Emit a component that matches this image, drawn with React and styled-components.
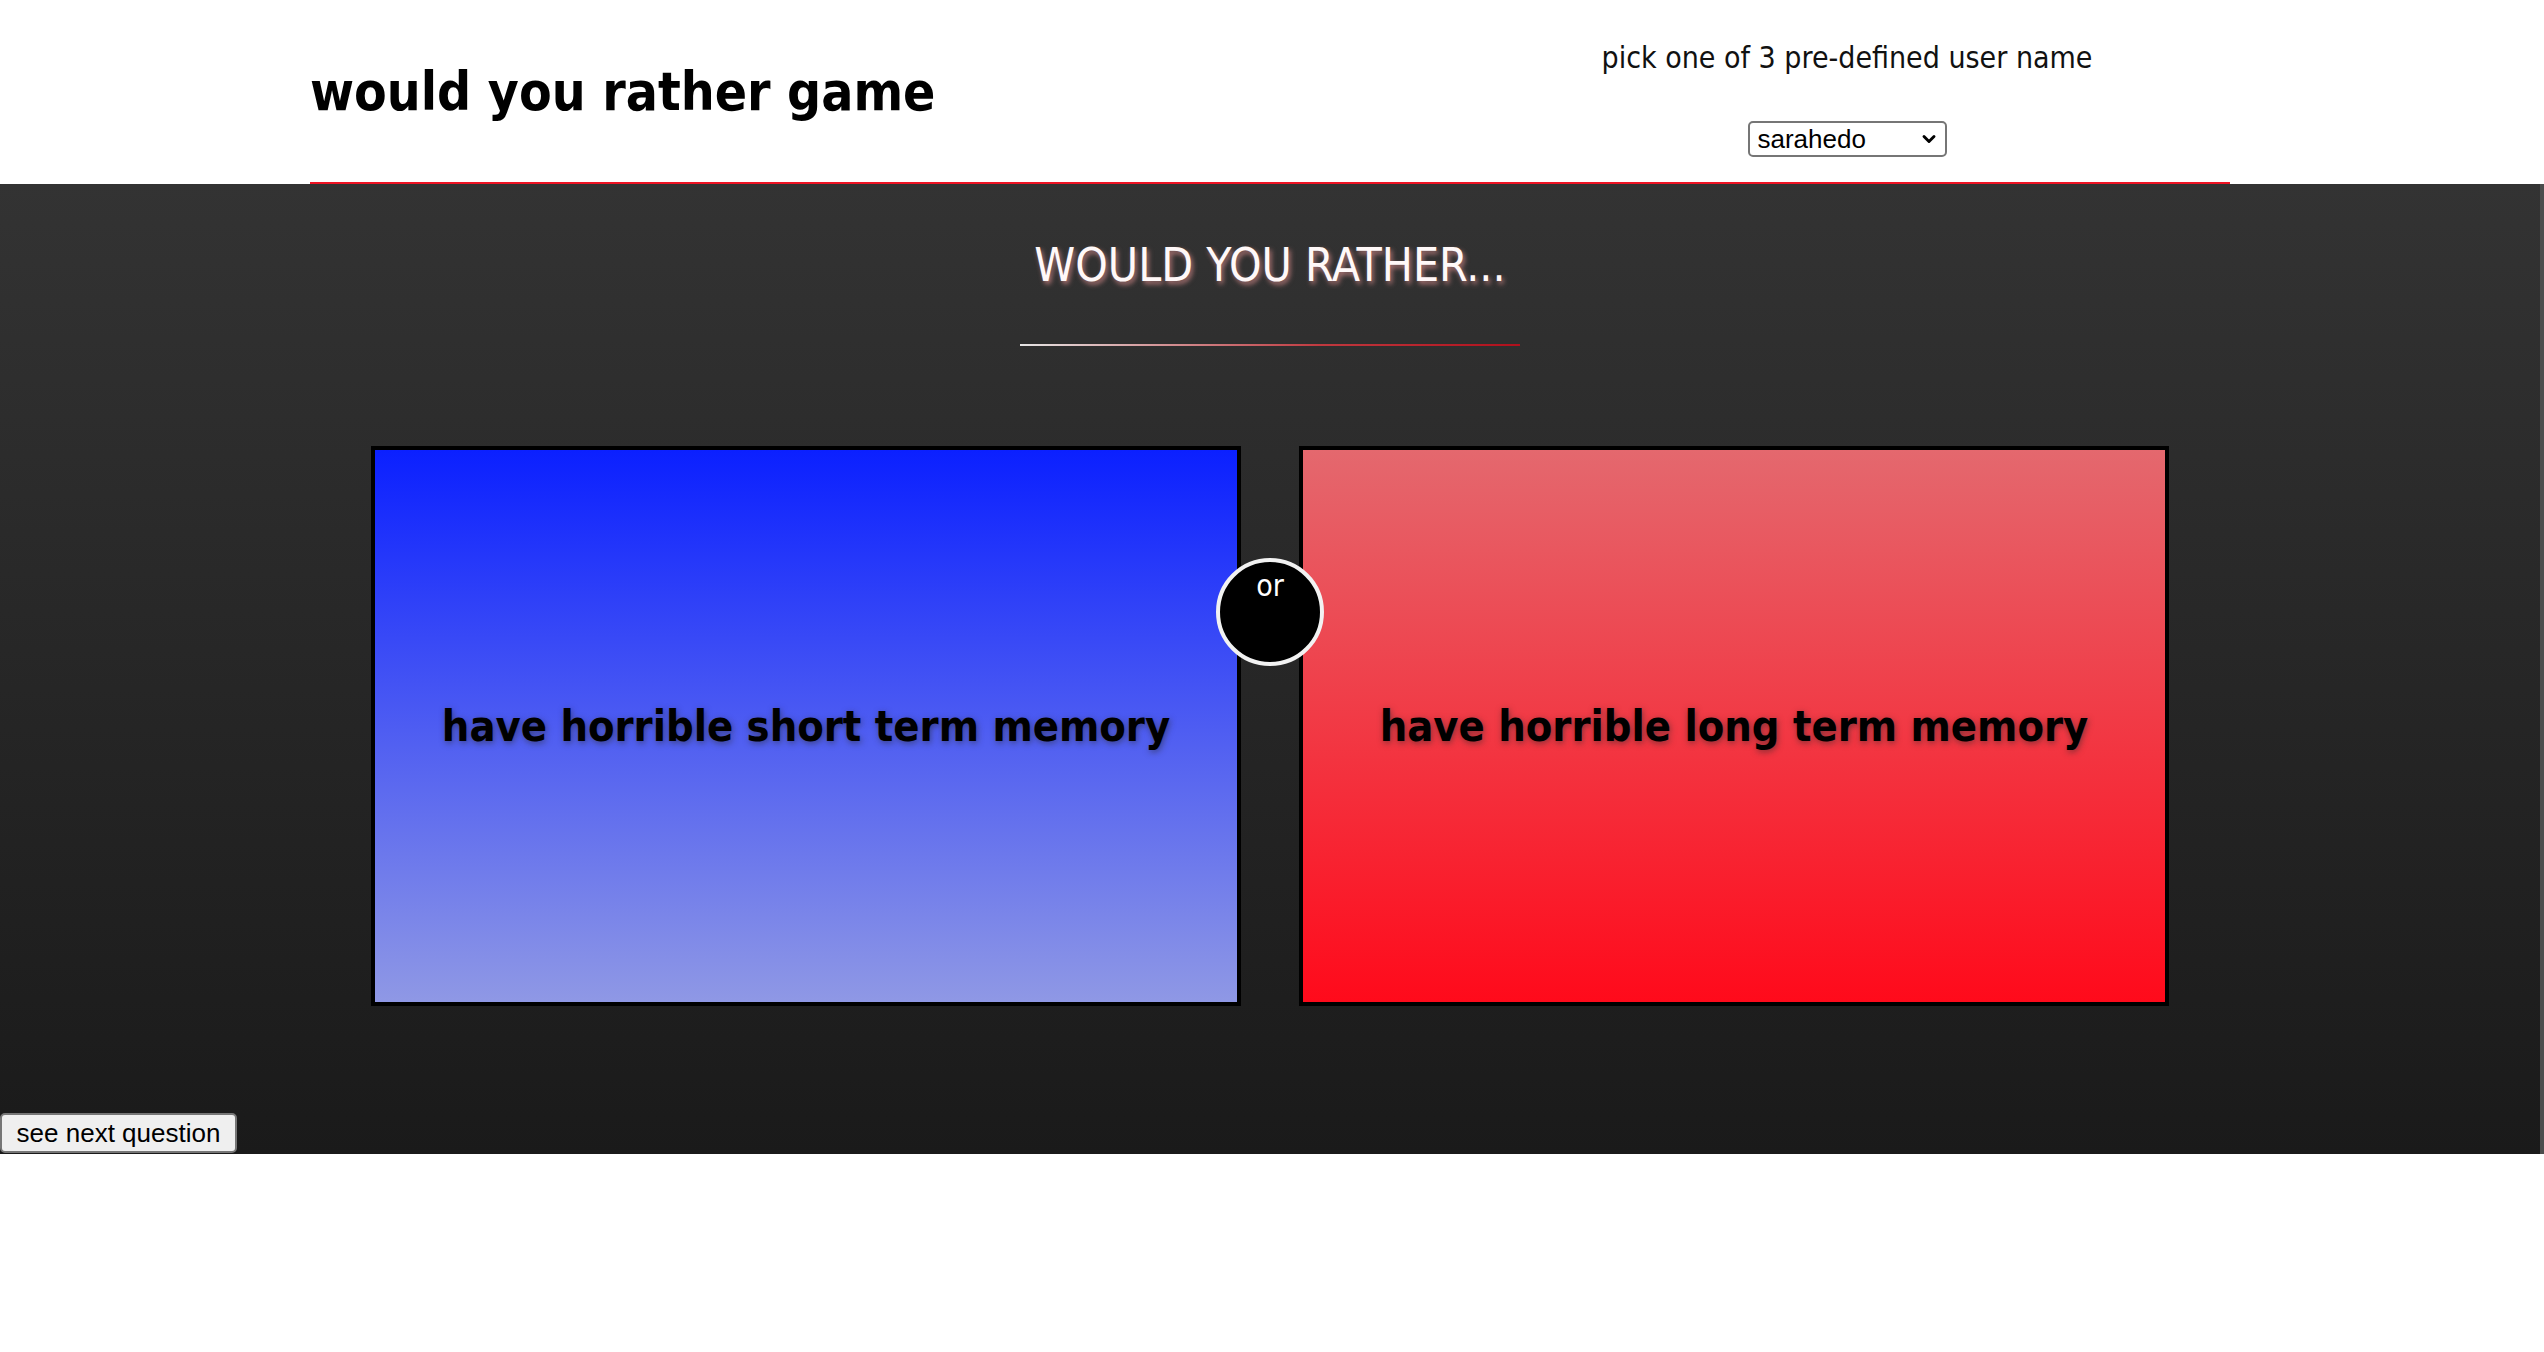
import React from "react";
import styled, { createGlobalStyle } from "styled-components";
import { ChevronDown } from "lucide-react";

const narrow = `"DejaVu Sans Condensed", "DejaVu Sans", "Open Sans", sans-serif`;

const GlobalStyle = createGlobalStyle`
  html, body {
    margin: 0;
    padding: 0;
    background: #fff;
  }
  body {
    font-family: ${narrow};
  }
`;

const Page = styled.div`
  padding-right: 4px;
  min-height: 1352px;
  box-sizing: border-box;
`;

const Header = styled.header`
  width: 1920px;
  height: 184px;
  margin: 0 auto;
  display: flex;
  justify-content: space-between;
  align-items: flex-start;
  border-bottom: 2px solid #ee1424;
  box-sizing: border-box;
`;

const Title = styled.h1`
  margin: 0;
  padding-top: 60px;
  font-size: 53px;
  line-height: 64px;
  font-weight: 700;
  color: #000;
`;

const UserPicker = styled.div`
  width: 766px;
  padding-top: 40px;
  display: flex;
  flex-direction: column;
  align-items: center;
`;

const PickerLabel = styled.p`
  margin: 0 0 45px;
  font-size: 30px;
  line-height: 36px;
  color: #111;
`;

const SelectWrap = styled.div`
  position: relative;
  width: 199px;
  height: 36px;
`;

const UserSelect = styled.select`
  appearance: none;
  width: 100%;
  height: 100%;
  font-family: "Liberation Sans", Arial, sans-serif;
  font-size: 26px;
  padding: 0 8px;
  border: 2px solid #767676;
  border-radius: 5px;
  background: #fff;
  color: #000;
`;

const SelectArrow = styled(ChevronDown)`
  position: absolute;
  right: 8px;
  top: 8px;
  pointer-events: none;
  color: #000;
`;

const Stage = styled.main`
  margin-right: -4px;
  border-right: 4px solid #4c4c4c;
  background: linear-gradient(to bottom, #333333, #1a1a1a);
  display: flex;
  flex-direction: column;
  align-items: center;
  padding: 53px 0 1px;
`;

const Question = styled.h2`
  margin: 0;
  font-size: 46px;
  line-height: 56px;
  font-weight: 400;
  color: #fff8f8;
  text-shadow: 2px 3px 5px rgba(200, 130, 130, 0.85);
`;

const Rule = styled.div`
  width: 500px;
  height: 2px;
  margin-top: 51px;
  background: linear-gradient(to right, #e6e6e6, #c0393f 60%, #b0101c);
`;

const Options = styled.div`
  position: relative;
  margin-top: 100px;
  display: flex;
  gap: 58px;
`;

const Option = styled.div`
  width: 870px;
  height: 560px;
  box-sizing: border-box;
  border: 4px solid #000;
  background: ${({ $from, $to }) => `linear-gradient(to bottom, ${$from}, ${$to})`};
  display: flex;
  align-items: center;
  justify-content: center;
  cursor: pointer;
`;

const OptionText = styled.span`
  font-size: 43px;
  font-weight: 700;
  color: #000;
  text-shadow: 1px 2px 6px rgba(40, 40, 40, 0.55);
`;

const OrBadge = styled.div`
  position: absolute;
  top: 112px;
  left: 50%;
  transform: translateX(-50%);
  width: 108px;
  height: 108px;
  box-sizing: border-box;
  border-radius: 50%;
  border: 4px solid #f2f2f2;
  background: #000;
  color: #fff;
  font-size: 30px;
  line-height: 36px;
  text-align: center;
  padding-top: 6px;
`;

const NextButton = styled.button`
  align-self: flex-start;
  margin-top: 107px;
  width: 237px;
  height: 40px;
  font-family: "Liberation Sans", Arial, sans-serif;
  font-size: 26px;
  color: #000;
  background: #efefef;
  border: 2px solid #767676;
  border-radius: 5px;
  padding: 0 10px;
  cursor: pointer;
`;

const users = ["sarahedo", "tylermcginnis", "johndoe"];

export default function App() {
  return (
    <>
      <GlobalStyle />
      <Page>
        <Header>
          <Title>would you rather game</Title>
          <UserPicker>
            <PickerLabel>pick one of 3 pre-defined user name</PickerLabel>
            <SelectWrap>
              <UserSelect defaultValue="sarahedo">
                {users.map((u) => (
                  <option key={u} value={u}>
                    {u}
                  </option>
                ))}
              </UserSelect>
              <SelectArrow size={20} strokeWidth={3.5} />
            </SelectWrap>
          </UserPicker>
        </Header>
        <Stage>
          <Question>WOULD YOU RATHER...</Question>
          <Rule />
          <Options>
            <Option $from="#0b20ff" $to="#8f98e5">
              <OptionText>have horrible short term memory</OptionText>
            </Option>
            <OrBadge>or</OrBadge>
            <Option $from="#e4686e" $to="#ff0a1b">
              <OptionText>have horrible long term memory</OptionText>
            </Option>
          </Options>
          <NextButton>see next question</NextButton>
        </Stage>
      </Page>
    </>
  );
}
